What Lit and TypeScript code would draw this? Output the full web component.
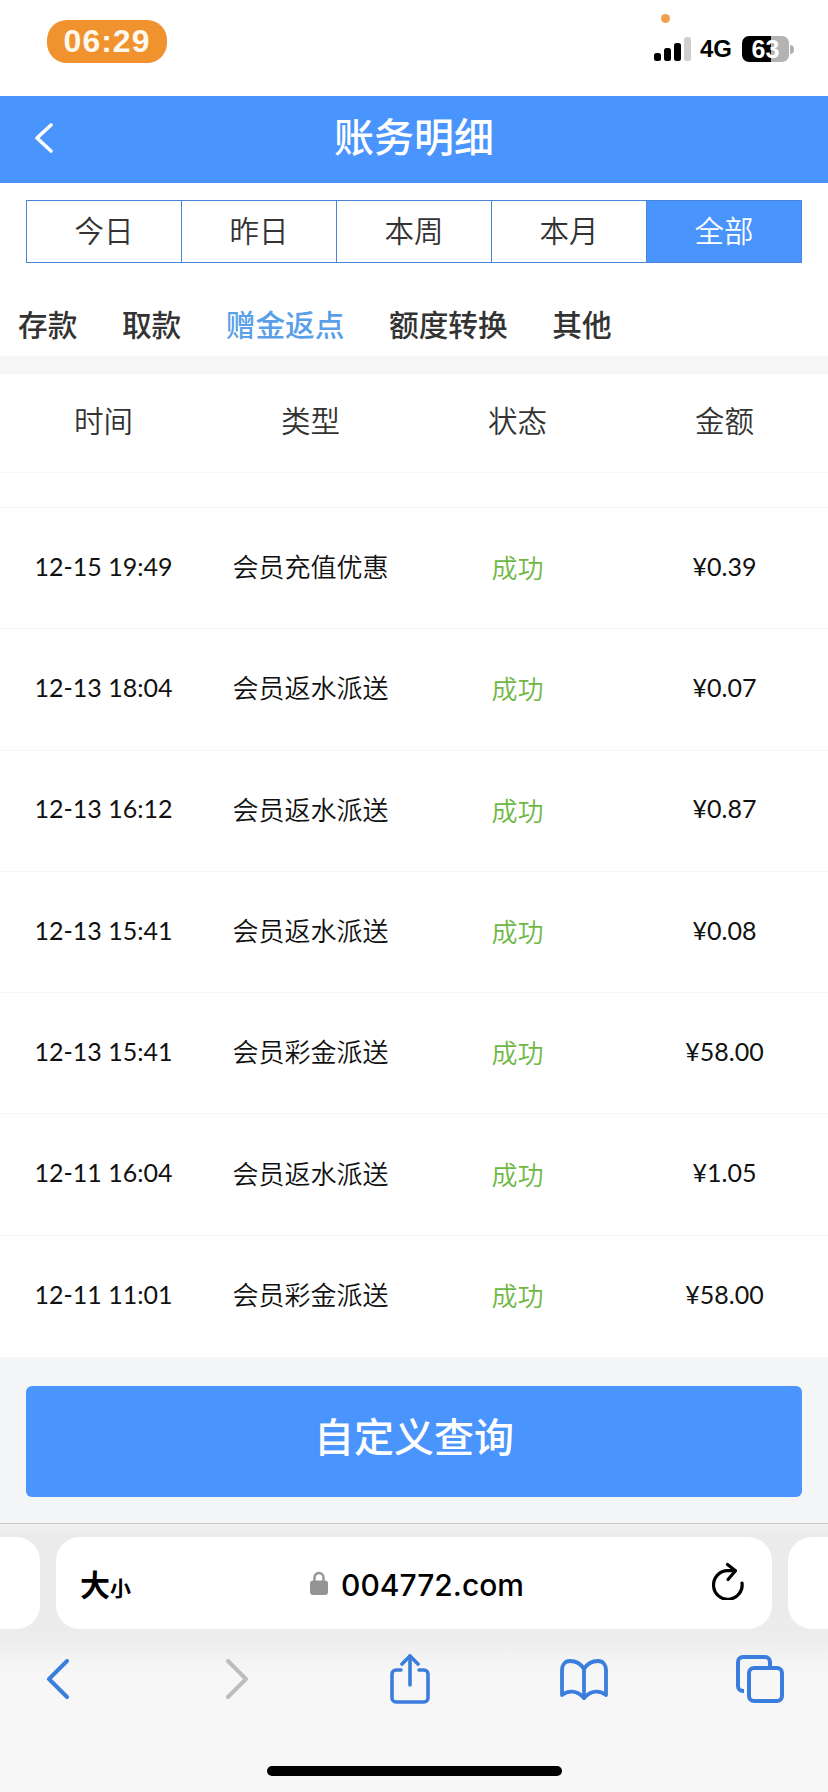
import { LitElement, html, css } from "lit";
import { customElement } from "lit/decorators.js";

const ranges = ["今日", "昨日", "本周", "本月", "全部"];
const tabs = ["存款", "取款", "赠金返点", "额度转换", "其他"];
const heads = ["时间", "类型", "状态", "金额"];
const rows = [
  ["12-15 19:49", "会员充值优惠", "¥0.39"],
  ["12-13 18:04", "会员返水派送", "¥0.07"],
  ["12-13 16:12", "会员返水派送", "¥0.87"],
  ["12-13 15:41", "会员返水派送", "¥0.08"],
  ["12-13 15:41", "会员彩金派送", "¥58.00"],
  ["12-11 16:04", "会员返水派送", "¥1.05"],
  ["12-11 11:01", "会员彩金派送", "¥58.00"],
];

@customElement("app-root")
export class AppRoot extends LitElement {
  static styles = css`
    :host {
      display: block;
      width: 828px;
      height: 1792px;
      overflow: hidden;
      background: #fff;
      color: #333;
      font-family: "Noto Sans CJK SC", "Noto Sans", sans-serif;
    }
    .status {
      position: relative;
      height: 96px;
      box-sizing: border-box;
      display: flex;
      align-items: flex-start;
      justify-content: space-between;
      padding: 20px 34px 0 47px;
    }
    .clock {
      width: 120px;
      height: 43px;
      border-radius: 20px;
      background: #f0922e;
      color: #fff8ee;
      font: 700 32px/43px "Liberation Sans", sans-serif;
      letter-spacing: 1px;
      text-align: center;
    }
    .dot {
      position: absolute;
      left: 661px;
      top: 14px;
      width: 9px;
      height: 9px;
      border-radius: 50%;
      background: #f0a050;
    }
    .indicators {
      display: flex;
      align-items: center;
      margin-top: 16px;
    }
    .network {
      font: 700 24px/26px "Liberation Sans", sans-serif;
      color: #000;
      margin: 0 10px 0 9px;
    }
    .battery {
      position: relative;
      width: 47px;
      height: 26px;
      border-radius: 7px;
      overflow: hidden;
      background: linear-gradient(90deg, #000 0 29px, #b3b3b3 29px);
      color: #fff;
      font: 700 25px/26px "Liberation Sans", sans-serif;
      text-align: center;
    }
    .nub {
      width: 4px;
      height: 9px;
      margin-left: 1px;
      border-radius: 0 4px 4px 0;
      background: #b3b3b3;
    }
    .header {
      position: relative;
      height: 87px;
      box-sizing: border-box;
      padding-bottom: 9px;
      background: #4a94fd;
      color: #fff;
      display: flex;
      align-items: center;
      justify-content: center;
      font-size: 40px;
      font-weight: 500;
    }
    .header svg {
      position: absolute;
      left: 34px;
      top: 27px;
    }
    .ranges {
      display: flex;
      margin: 17px 26px 0;
      height: 63px;
      box-sizing: border-box;
      border: 1px solid #4a86d8;
    }
    .ranges div {
      flex: 1;
      display: flex;
      align-items: center;
      justify-content: center;
      font-size: 29.5px;
      font-weight: 350;
      padding-bottom: 5px;
      border-right: 1px solid #4a86d8;
    }
    .ranges div:last-child {
      border-right: 0;
    }
    .ranges .on {
      background: #4a94fd;
      color: #fff;
    }
    .tabs {
      display: flex;
      gap: 44.5px;
      height: 93px;
      box-sizing: border-box;
      padding: 36px 0 0 18px;
      font-size: 29.7px;
      line-height: 50px;
      font-weight: 500;
    }
    .tabs .on {
      color: #5a9fe8;
    }
    .band {
      height: 18px;
      background: #f6f6f6;
    }
    .grid {
      display: grid;
      grid-template-columns: repeat(4, 1fr);
      align-items: center;
      text-align: center;
    }
    .head {
      height: 99px;
      box-sizing: border-box;
      padding-bottom: 8px;
      border-bottom: 1px solid #f7f7f7;
      font-size: 29.5px;
      font-weight: 350;
    }
    .blank {
      height: 35px;
      box-sizing: border-box;
      border-bottom: 1px solid #f5f5f5;
    }
    .row {
      height: 121.3px;
      box-sizing: border-box;
      padding-bottom: 5px;
      border-bottom: 1px solid #f5f5f5;
      color: #111;
      font-size: 26px;
      font-weight: 350;
    }
    .row:last-child {
      border-bottom: 0;
    }
    .latin {
      font-family: "Lato", "Noto Sans CJK SC", sans-serif;
      font-size: 25px;
      font-weight: 400;
    }
    .ok {
      color: #6fb845;
      padding-top: 2px;
    }
    .actions {
      height: 167px;
      box-sizing: border-box;
      padding: 29px 26px 0;
      background: #f4f5f6;
      border-bottom: 1px solid #c8c8c8;
    }
    .query {
      height: 111px;
      border-radius: 6px;
      background: #4a94fd;
      color: #fff;
      display: flex;
      align-items: center;
      justify-content: center;
      font-size: 40px;
      font-weight: 500;
      padding-bottom: 14px;
      box-sizing: border-box;
    }
    .browser {
      height: 268px;
      background: linear-gradient(#f1f1f1, #ebebeb 13px, #ececec 110px, #f7f7f7 150px);
    }
    .pills {
      display: grid;
      grid-template-columns: 40px 716px 40px;
      justify-content: space-between;
      padding-top: 13px;
    }
    .pill {
      height: 92px;
      background: #fff;
      border-radius: 24px;
    }
    .pill.left {
      border-radius: 0 24px 24px 0;
    }
    .pill.right {
      border-radius: 24px 0 0 24px;
    }
    .address {
      display: flex;
      align-items: center;
      padding: 0 28px 0 24px;
      color: #000;
    }
    .aa {
      font-size: 30px;
      font-weight: 700;
      line-height: 1;
      width: 70px;
      white-space: nowrap;
    }
    .aa small {
      font-size: 21px;
    }
    .site {
      flex: 1;
      display: flex;
      align-items: center;
      justify-content: center;
      gap: 13px;
      padding-right: 28px;
      font: 500 30px/1 "Inter", sans-serif;
    }
    .site span {
      margin-top: 4px;
    }
    .reload {
      margin-bottom: 4px;
    }
    .toolbar {
      display: flex;
      align-items: center;
      height: 50px;
      margin-top: 25px;
    }
    .tool {
      display: flex;
      justify-content: center;
    }
    .t1 { width: 47px; margin-left: 34px; }
    .t2 { width: 47px; margin-left: 132px; }
    .t3 { width: 50px; margin-left: 125px; }
    .t4 { width: 60px; margin-left: 119px; }
    .t5 { width: 60px; margin-left: 116px; }
    .home {
      width: 295px;
      height: 10px;
      margin: 62px auto 0;
      border-radius: 5px;
      background: #000;
    }
    svg {
      display: block;
    }
  `;

  render() {
    return html`
      <div class="status">
        <div class="clock">06:29</div>
        <div class="dot"></div>
        <div class="indicators">
          <svg width="37" height="24" viewBox="0 0 37 24">
            <rect x="0" y="16" width="7" height="8" rx="2.5" fill="#000" />
            <rect x="10" y="11" width="7" height="13" rx="2.5" fill="#000" />
            <rect x="20" y="6" width="7" height="18" rx="2.5" fill="#000" />
            <rect x="30" y="0" width="7" height="24" rx="2.5" fill="#cfcfcf" />
          </svg>
          <span class="network">4G</span>
          <div class="battery">63</div>
          <div class="nub"></div>
        </div>
      </div>

      <div class="header">
        <svg width="20" height="30" viewBox="0 0 20 30" fill="none" stroke="#fff" stroke-width="3.6" stroke-linecap="round" stroke-linejoin="round">
          <path d="M17 2 3 15l14 13" />
        </svg>
        账务明细
      </div>

      <div class="ranges">
        ${ranges.map((r, i) => html`<div class=${i === 4 ? "on" : ""}>${r}</div>`)}
      </div>

      <div class="tabs">
        ${tabs.map((t, i) => html`<div class=${i === 2 ? "on" : ""}>${t}</div>`)}
      </div>
      <div class="band"></div>

      <div class="grid head">${heads.map((h) => html`<div>${h}</div>`)}</div>
      <div class="blank"></div>
      <div class="rows">
        ${rows.map(
          (r) => html`
            <div class="grid row">
              <div class="latin">${r[0]}</div>
              <div>${r[1]}</div>
              <div class="ok">成功</div>
              <div class="latin">${r[2]}</div>
            </div>
          `
        )}
      </div>

      <div class="actions"><div class="query">自定义查询</div></div>

      <div class="browser">
        <div class="pills">
          <div class="pill left"></div>
          <div class="pill address">
            <div class="aa">大<small>小</small></div>
            <div class="site">
              <svg width="18" height="24" viewBox="0 0 18 24">
                <path d="M4.5 10V6.5a4.5 4.5 0 0 1 9 0V10" fill="none" stroke="#949494" stroke-width="2.4" />
                <rect x="0" y="9.5" width="18" height="14.5" rx="3" fill="#949494" />
              </svg>
              <span>004772.com</span>
            </div>
            <svg class="reload" width="32" height="38" viewBox="0 0 32 38" fill="none" stroke="#000" stroke-width="3.2" stroke-linecap="round" stroke-linejoin="round">
              <path d="M30 21a14.3 14.3 0 1 1-14.3-12.3H23" />
              <path d="M15.5 2.5 23.5 8.7 16 17.5" />
            </svg>
          </div>
          <div class="pill right"></div>
        </div>
        <div class="toolbar">
          <div class="tool t1">
            <svg width="24" height="40" viewBox="0 0 24 40" fill="none" stroke="#3b7ddd" stroke-width="4" stroke-linecap="round" stroke-linejoin="round">
              <path d="M21 2 3 20l18 18" />
            </svg>
          </div>
          <div class="tool t2">
            <svg width="24" height="40" viewBox="0 0 24 40" fill="none" stroke="#bdbdbd" stroke-width="4" stroke-linecap="round" stroke-linejoin="round">
              <path d="M3 2l18 18L3 38" />
            </svg>
          </div>
          <div class="tool t3">
            <svg width="40" height="50" viewBox="0 0 40 50" fill="none" stroke="#3b7ddd" stroke-width="3.6" stroke-linecap="round" stroke-linejoin="round">
              <path d="M11 16H6a4 4 0 0 0-4 4v24a4 4 0 0 0 4 4h28a4 4 0 0 0 4-4V20a4 4 0 0 0-4-4h-5" />
              <path d="M20 31V2" />
              <path d="M12 10l8-8 8 8" />
            </svg>
          </div>
          <div class="tool t4">
            <svg width="50" height="43" viewBox="0 0 50 43" fill="none" stroke="#3b7ddd" stroke-width="3.8" stroke-linecap="round" stroke-linejoin="round">
              <path d="M25 11C22 6 17 3 11 3 6 3 3 7 3 12v25c6-5 15-5 22 3 7-8 16-8 22-3V12c0-5-3-9-8-9-6 0-11 3-14 8z" />
              <path d="M25 11v29" />
            </svg>
          </div>
          <div class="tool t5">
            <svg width="48" height="48" viewBox="0 0 48 48" fill="none" stroke="#3b7ddd" stroke-width="4" stroke-linejoin="round">
              <path d="M8 36H7a5 5 0 0 1-5-5V7a5 5 0 0 1 5-5h22a5 5 0 0 1 5 5v5" />
              <rect x="13" y="13" width="33" height="33" rx="5" />
            </svg>
          </div>
        </div>
        <div class="home"></div>
      </div>
    `;
  }
}
